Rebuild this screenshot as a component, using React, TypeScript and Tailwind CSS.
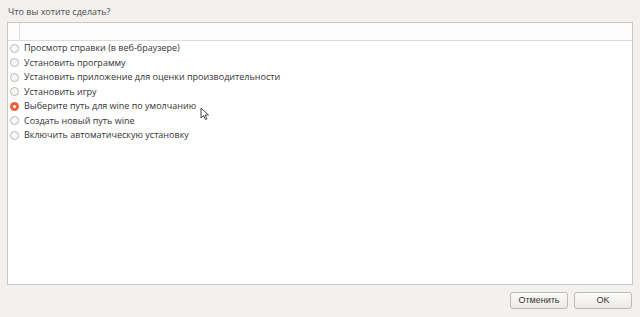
const options = [
  "Просмотр справки (в веб-браузере)",
  "Установить программу",
  "Установить приложение для оценки производительности",
  "Установить игру",
  "Выберите путь для wine по умолчанию",
  "Создать новый путь wine",
  "Включить автоматическую установку",
];

const Radio = ({ checked }: { checked: boolean }) =>
  checked ? (
    <span className="w-[9px] h-[9px] rounded-full bg-[#e9643a] flex items-center justify-center shrink-0">
      <span className="w-[3px] h-[3px] rounded-full bg-white" />
    </span>
  ) : (
    <span className="w-[9px] h-[9px] rounded-full border border-[#b8b6b2] bg-[#f7f7f6] shrink-0" />
  );

export default function App() {
  return (
    <div
      className="relative w-[640px] h-[317px] bg-[#f2f1f0] flex flex-col text-[#333]"
      style={{ fontFamily: '"Open Sans", "Noto Sans", sans-serif' }}
    >
      <div className="pl-[8px] pt-[6px] h-[22px] text-[9px] leading-[12px] text-[#4c4c4c]">Что вы хотите сделать?</div>

      {/* list */}
      <div className="ml-[7px] mr-[7px] h-[263px] bg-white border border-[#c9c8c6] flex flex-col">
        <div className="h-[18px] border-b border-[#dcdbd9] bg-[#fcfcfc] flex">
          <div className="w-[12px] border-r border-[#dcdbd9]" />
        </div>
        <div className="flex flex-col">
          {options.map((o, i) => (
            <div key={o} className="h-[14.5px] flex items-center gap-[5px] pl-[2px] text-[9px] leading-[14px] text-[#333]">
              <Radio checked={i === 4} />
              <span>{o}</span>
            </div>
          ))}
        </div>
      </div>

      {/* mouse pointer */}
      <svg className="absolute left-[200px] top-[107px]" width="10" height="14" viewBox="0 0 10 14">
        <path d="M1 1 L1 11 L3.5 8.5 L5.5 12.5 L7 11.8 L5 8 L8.5 8 Z" fill="white" stroke="#333" strokeWidth="0.9" strokeLinejoin="round" />
      </svg>

      {/* buttons */}
      <div className="flex justify-end gap-[6px] pr-[8px] pt-[7px]">
        <button
          className="w-[58px] h-[17px] rounded-[3px] border border-[#bdbbb8] bg-gradient-to-b from-[#fbfbfa] to-[#eceae8] text-[9px] text-[#333] leading-none"
          style={{ fontFamily: '"Liberation Sans", Arial, sans-serif' }}
        >
          Отменить
        </button>
        <button
          className="w-[58px] h-[17px] rounded-[3px] border border-[#bdbbb8] bg-gradient-to-b from-[#fbfbfa] to-[#eceae8] text-[9px] text-[#333] leading-none"
          style={{ fontFamily: '"Liberation Sans", Arial, sans-serif' }}
        >
          OK
        </button>
      </div>
    </div>
  );
}
